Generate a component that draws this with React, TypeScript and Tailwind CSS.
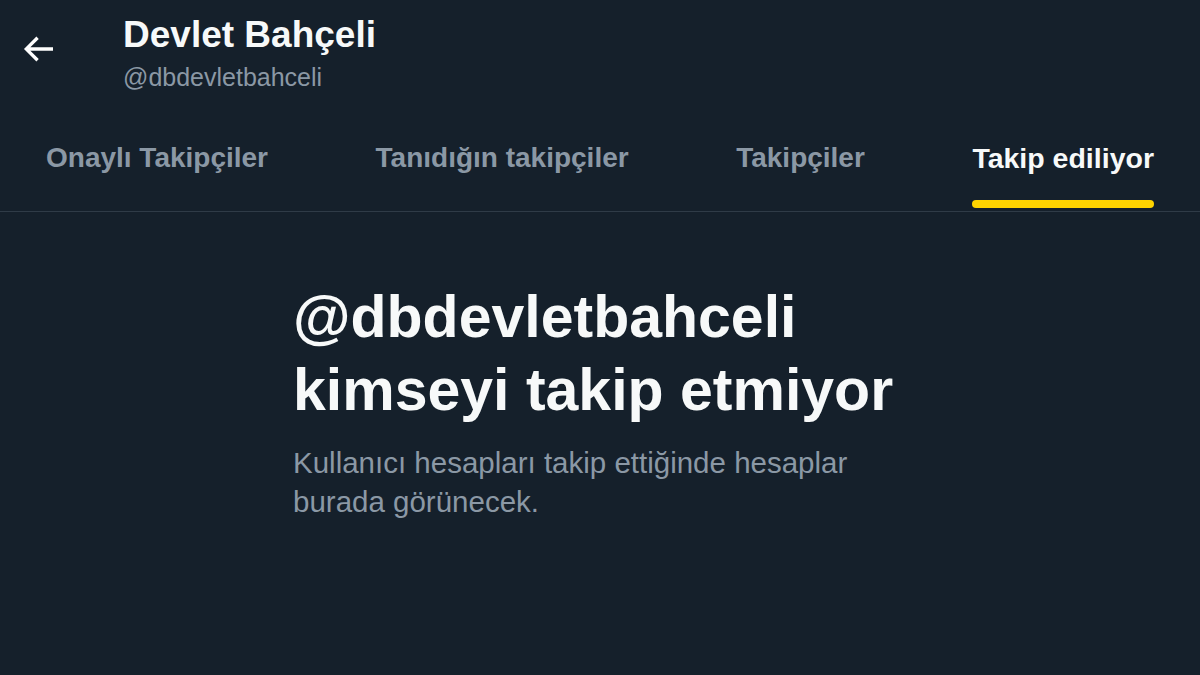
export default function App() {
  const tabs = [
    { label: 'Onaylı Takipçiler', active: false },
    { label: 'Tanıdığın takipçiler', active: false },
    { label: 'Takipçiler', active: false },
    { label: 'Takip ediliyor', active: true },
  ];

  return (
    <div className="w-[1200px] h-[675px] overflow-hidden bg-[#15202b] font-['Liberation_Sans',Arial,sans-serif]">
      {/* Header */}
      <div className="flex items-start pt-[13px]">
        <svg viewBox="0 0 24 24" className="ml-[18px] mt-[16px] h-[40px] w-[40px] fill-white">
          <path d="M7.414 13l5.043 5.04-1.414 1.42L3.586 12l7.457-7.46 1.414 1.42L7.414 11H21v2H7.414z" />
        </svg>
        <div className="ml-[65px] flex flex-col">
          <h1 className="text-[37px] leading-[44px] font-bold text-[#f7f9f9]">Devlet Bahçeli</h1>
          <p className="mt-[5px] text-[25px] leading-[30px] text-[#8b98a5]">@dbdevletbahceli</p>
        </div>
      </div>

      {/* Tabs */}
      <div className="mt-[49px] flex justify-between px-[46px] pb-[3px] border-b border-[#2f3b47]">
        {tabs.map((tab) => (
          <div key={tab.label} className="flex flex-col">
            <span
              className={`leading-[34px] whitespace-nowrap font-bold ${
                tab.active ? 'text-[28.5px] text-[#f7f9f9]' : 'text-[28px] text-[#8b98a5]'
              }`}
            >
              {tab.label}
            </span>
            <div className={`mt-[25px] h-2 rounded-full ${tab.active ? 'bg-[#ffd400]' : 'bg-transparent'}`} />
          </div>
        ))}
      </div>

      {/* Empty state */}
      <div className="mt-[69px] pl-[293px]">
        <h2 className="text-[59px] leading-[73px] font-bold text-[#f7f9f9]">
          @dbdevletbahceli
          <br />
          kimseyi takip etmiyor
        </h2>
        <p className="mt-[16px] w-[600px] text-[29.5px] leading-[39px] text-[#8b98a5]">
          Kullanıcı hesapları takip ettiğinde hesaplar burada görünecek.
        </p>
      </div>
    </div>
  );
}
